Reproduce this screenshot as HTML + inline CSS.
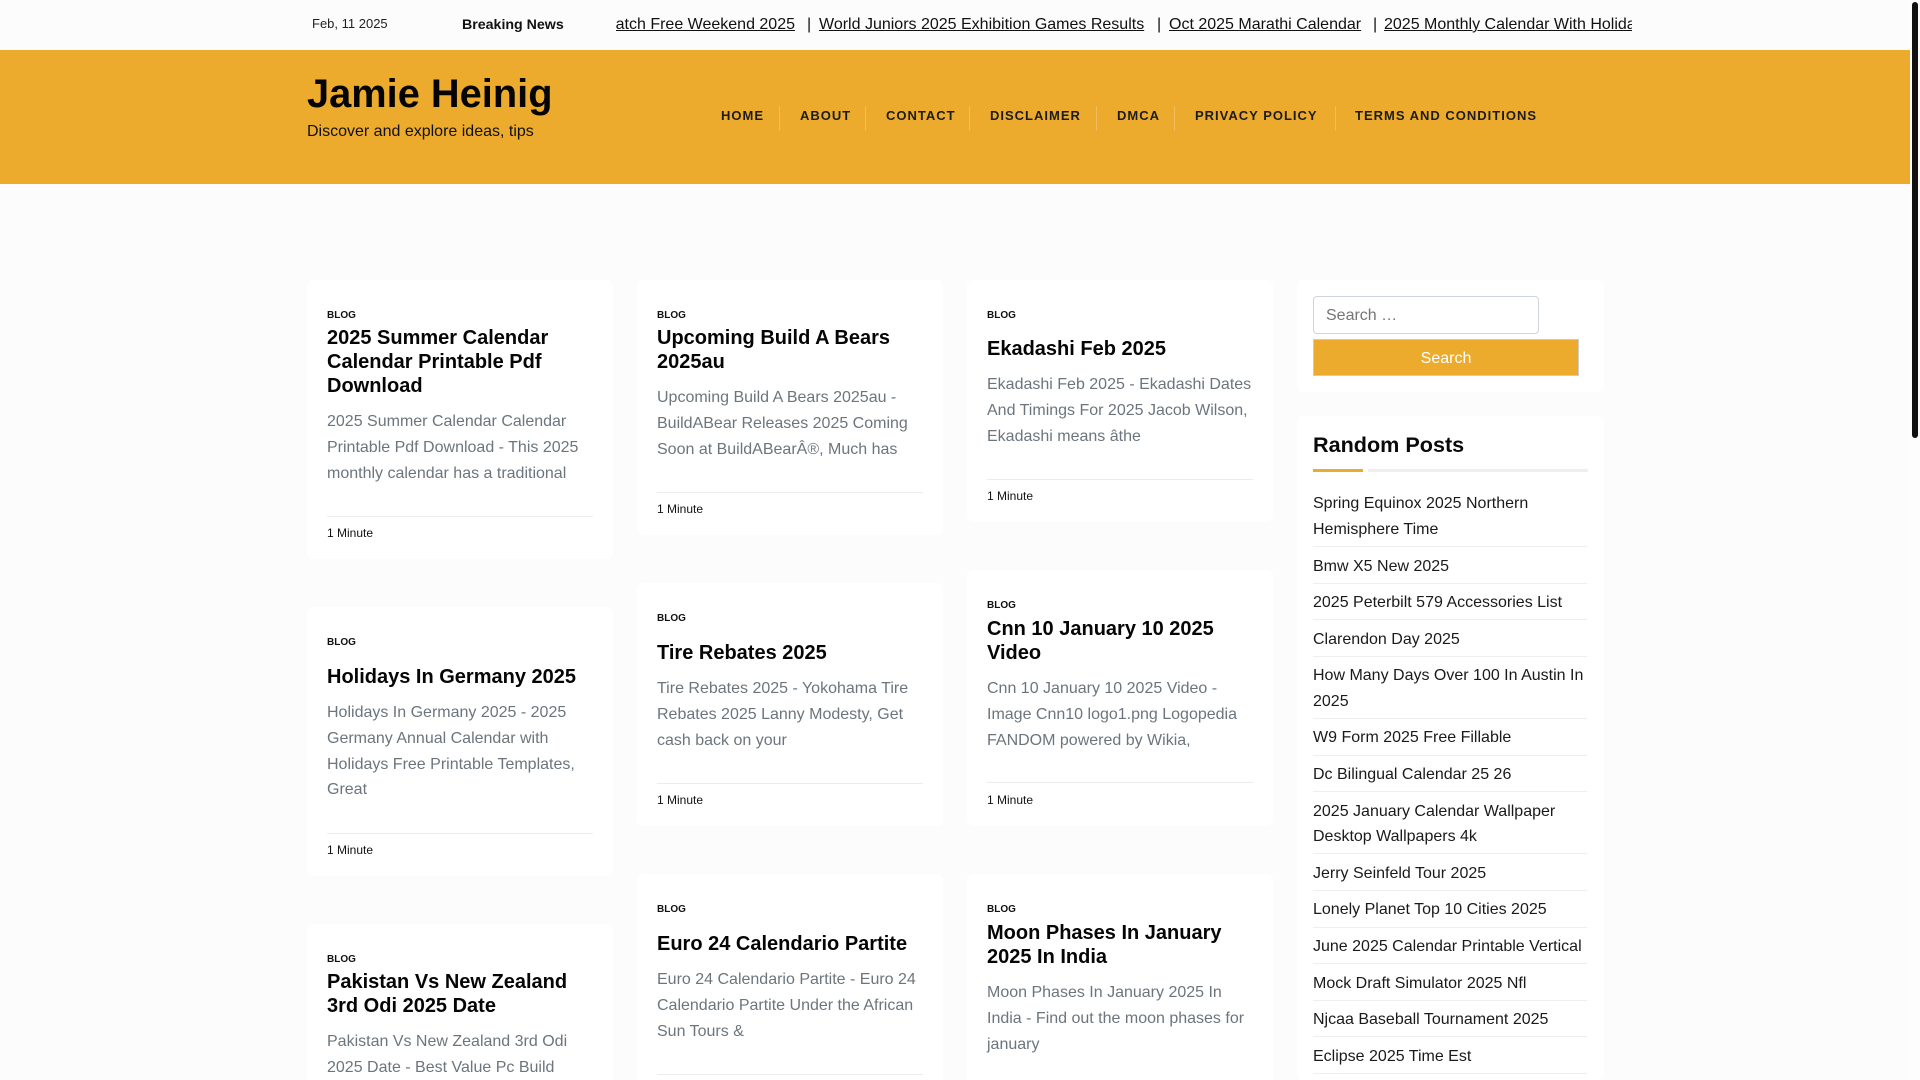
<!DOCTYPE html>
<html lang="en">
<head>
<meta charset="utf-8">
<title>Jamie Heinig</title>
<style>
html,body{margin:0;padding:0;width:1920px;height:1080px;overflow:hidden;background:#fcfcfc;font-family:"Liberation Sans",Arial,sans-serif;color:#111}
#page{position:relative;width:1920px;height:1080px;overflow:hidden;background:#fcfcfc}
.abs{position:absolute;white-space:nowrap}
#hdr{position:absolute;left:0;top:50px;width:1910px;height:134px;background:#ecab2c}
#sbtrack{position:absolute;left:1910px;top:0;width:10px;height:1080px;background:#fdfdfd}
#sb{position:absolute;left:1912px;top:2px;width:6px;height:436px;background:#111;border-radius:3px}
#tick{position:absolute;left:616px;top:0;width:1016px;height:50px;overflow:hidden}
#tick a{position:absolute;top:15px;line-height:20px;font-size:16px;color:#111;text-decoration:underline;white-space:nowrap}
#tick span{position:absolute;top:15px;line-height:20px;font-size:16px;color:#111}
.nav{position:absolute;top:107px;line-height:18px;font-size:13px;font-weight:700;letter-spacing:1px;color:#1c1c1c;white-space:nowrap}
.sep{position:absolute;top:106px;width:1px;height:25px;background:rgba(255,255,255,.22)}
.card{position:absolute;width:266px;padding:27px 20px 17px;background:#fff;border-radius:6px}
.c1{left:307px}.c2{left:637px}.c3{left:967px}
.low{padding-bottom:0;overflow:hidden;border-radius:6px 6px 0 0}
.cat{font-size:10px;font-weight:700;line-height:18px;color:#111}
.card h2{margin:1px 0 0;font-size:20px;line-height:24px;font-weight:700;color:#050505;white-space:nowrap}
.card h2.one{margin-top:13px}
.card p{margin:11.4px 0 0;font-size:16px;line-height:25.6px;color:#6c757d;white-space:nowrap}
.card .meta{margin-top:30.3px;border-top:1px solid #ececec;padding-top:7px;font-size:12px;line-height:18px;color:#111}
.side{position:absolute;left:1297px;width:307px;background:#fff;border-radius:6px}
#inp{position:absolute;left:1313px;top:296px;width:224px;height:36px;border:1px solid #ced4da;border-radius:4px;background:#fff;font-size:16px;line-height:38px;color:#757575;text-indent:12px}
#btn{position:absolute;left:1313px;top:339px;width:264px;height:35px;border:1px solid #ccc;background:#ecab2c;color:#fff;font-size:16px;line-height:37px;text-align:center;padding-right:0}
#rp{position:absolute;left:1313px;top:431px;font-size:21.6px;line-height:28px;font-weight:700;color:#0a0a0a;white-space:nowrap}
#ul1{position:absolute;left:1313px;top:469px;width:50px;height:3px;background:#ecab2c}
#ul2{position:absolute;left:1368px;top:469px;width:220px;height:3px;background:#eee}
#list{position:absolute;left:1313px;top:485px;width:274px;margin:0;padding:0;list-style:none}
#list li{padding:6.4px 0 3.6px;border-bottom:1px solid #eee;font-size:16px;line-height:25.6px;color:#1a1a1a;white-space:nowrap}
</style>
</head>
<body>
<div id="page">
<div id="hdr"></div>
<div id="sbtrack"></div>
<div id="sb"></div>

<div class="abs" style="left:312px;top:15px;font-size:13px;line-height:18px;color:#222">Feb, 11 2025</div>
<div class="abs" style="left:462px;top:16px;font-size:14.2px;line-height:18px;font-weight:700;color:#111">Breaking News</div>
<div id="tick">
<a style="right:837px">Match Free Weekend 2025</a>
<span style="left:191px">|</span>
<a style="left:203px">World Juniors 2025 Exhibition Games Results</a>
<span style="left:541px">|</span>
<a style="left:553px">Oct 2025 Marathi Calendar</a>
<span style="left:757px">|</span>
<a style="left:768px">2025 Monthly Calendar With Holidays</a>
</div>

<div class="abs" style="left:307px;top:70px;font-size:39.8px;line-height:48px;font-weight:700;color:#050505">Jamie Heinig</div>
<div class="abs" style="left:307px;top:121.5px;font-size:16px;line-height:20px;color:#111">Discover and explore ideas, tips</div>

<div class="nav" style="left:721px">HOME</div><div class="sep" style="left:779px"></div>
<div class="nav" style="left:800px">ABOUT</div><div class="sep" style="left:865px"></div>
<div class="nav" style="left:886px">CONTACT</div><div class="sep" style="left:969px"></div>
<div class="nav" style="left:990px">DISCLAIMER</div><div class="sep" style="left:1096px"></div>
<div class="nav" style="left:1117px">DMCA</div><div class="sep" style="left:1174px"></div>
<div class="nav" style="left:1195px">PRIVACY POLICY</div><div class="sep" style="left:1335px"></div>
<div class="nav" style="left:1355px">TERMS AND CONDITIONS</div>

<div class="card c1" style="top:280px"><div class="cat">BLOG</div><h2>2025 Summer Calendar<br>Calendar Printable Pdf<br>Download</h2><p>2025 Summer Calendar Calendar<br>Printable Pdf Download - This 2025<br>monthly calendar has a traditional</p><div class="meta">1 Minute</div></div>
<div class="card c1" style="top:607px"><div class="cat">BLOG</div><h2 class="one">Holidays In Germany 2025</h2><p>Holidays In Germany 2025 - 2025<br>Germany Annual Calendar with<br>Holidays Free Printable Templates,<br>Great</p><div class="meta">1 Minute</div></div>
<div class="card c1 low" style="top:924px;height:129px"><div class="cat">BLOG</div><h2>Pakistan Vs New Zealand<br>3rd Odi 2025 Date</h2><p>Pakistan Vs New Zealand 3rd Odi<br>2025 Date - Best Value Pc Build</p></div>

<div class="card c2" style="top:280px"><div class="cat">BLOG</div><h2>Upcoming Build A Bears<br>2025au</h2><p>Upcoming Build A Bears 2025au -<br>BuildABear Releases 2025 Coming<br>Soon at BuildABearÂ®, Much has</p><div class="meta">1 Minute</div></div>
<div class="card c2" style="top:583px"><div class="cat">BLOG</div><h2 class="one">Tire Rebates 2025</h2><p>Tire Rebates 2025 - Yokohama Tire<br>Rebates 2025 Lanny Modesty, Get<br>cash back on your</p><div class="meta">1 Minute</div></div>
<div class="card c2 low" style="top:874px;height:179px"><div class="cat">BLOG</div><h2 class="one">Euro 24 Calendario Partite</h2><p>Euro 24 Calendario Partite - Euro 24<br>Calendario Partite Under the African<br>Sun Tours &amp;</p><div class="meta" style="height:0;padding:0"></div></div>

<div class="card c3" style="top:280px"><div class="cat">BLOG</div><h2 class="one" style="margin-top:12px">Ekadashi Feb 2025</h2><p>Ekadashi Feb 2025 - Ekadashi Dates<br>And Timings For 2025 Jacob Wilson,<br>Ekadashi means âthe</p><div class="meta">1 Minute</div></div>
<div class="card c3" style="top:570px"><div class="cat">BLOG</div><h2 style="margin-top:2px">Cnn 10 January 10 2025<br>Video</h2><p>Cnn 10 January 10 2025 Video -<br>Image Cnn10 logo1.png Logopedia<br>FANDOM powered by Wikia,</p><div class="meta" style="margin-top:29.3px;padding-top:8px">1 Minute</div></div>
<div class="card c3 low" style="top:874px;height:179px"><div class="cat">BLOG</div><h2 style="margin-top:2px">Moon Phases In January<br>2025 In India</h2><p>Moon Phases In January 2025 In<br>India - Find out the moon phases for<br>january</p></div>

<div class="side" style="top:280px;height:112px"></div>
<div id="inp">Search …</div>
<div id="btn">Search</div>

<div class="side" style="top:416px;height:664px"></div>
<div id="rp">Random Posts</div>
<div id="ul1"></div><div id="ul2"></div>
<ul id="list">
<li>Spring Equinox 2025 Northern<br>Hemisphere Time</li>
<li>Bmw X5 New 2025</li>
<li>2025 Peterbilt 579 Accessories List</li>
<li>Clarendon Day 2025</li>
<li>How Many Days Over 100 In Austin In<br>2025</li>
<li>W9 Form 2025 Free Fillable</li>
<li>Dc Bilingual Calendar 25 26</li>
<li>2025 January Calendar Wallpaper<br>Desktop Wallpapers 4k</li>
<li>Jerry Seinfeld Tour 2025</li>
<li>Lonely Planet Top 10 Cities 2025</li>
<li>June 2025 Calendar Printable Vertical</li>
<li>Mock Draft Simulator 2025 Nfl</li>
<li>Njcaa Baseball Tournament 2025</li>
<li>Eclipse 2025 Time Est</li>
</ul>
</div>
</body>
</html>
